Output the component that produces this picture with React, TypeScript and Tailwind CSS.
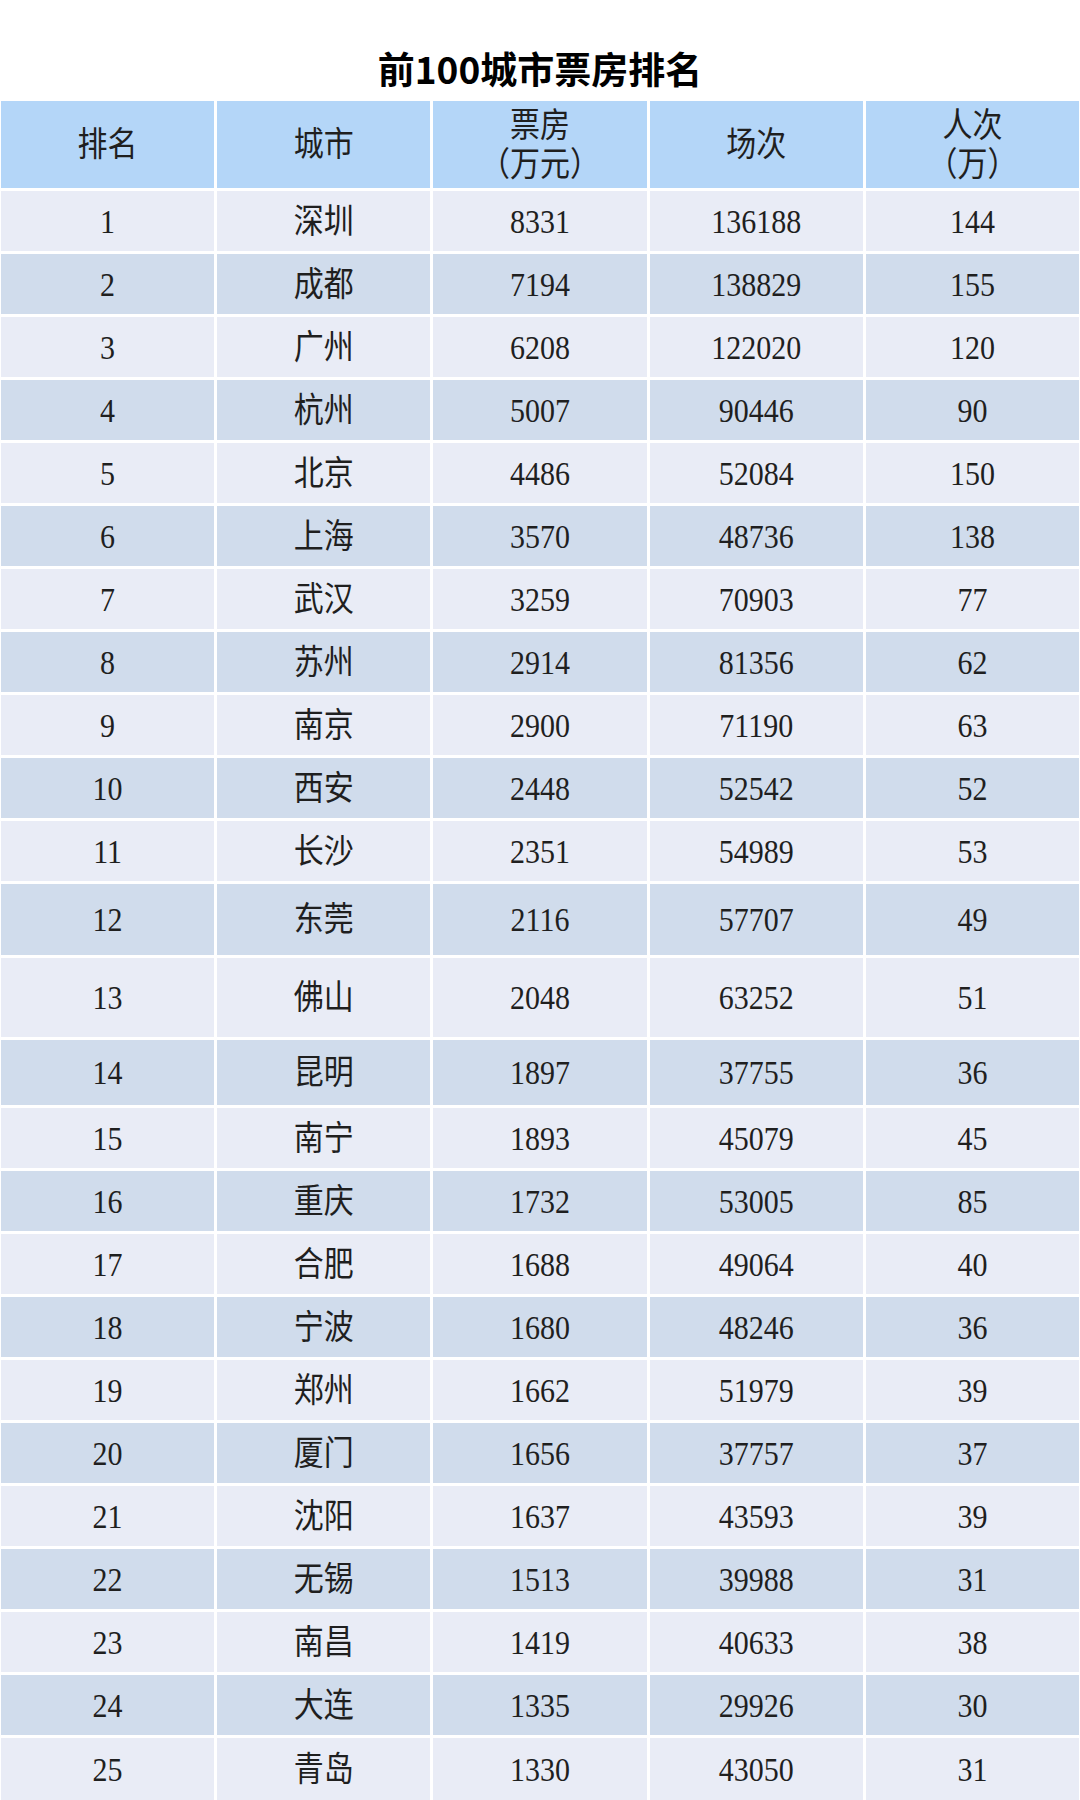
import React from "react";

type Row = { r: string; c: string; b: string; s: string; p: string; h: string };

const rows: Row[] = [
  { r: "1", c: "深圳", b: "8331", s: "136188", p: "144", h: "h-[60px]" },
  { r: "2", c: "成都", b: "7194", s: "138829", p: "155", h: "h-[60px]" },
  { r: "3", c: "广州", b: "6208", s: "122020", p: "120", h: "h-[60px]" },
  { r: "4", c: "杭州", b: "5007", s: "90446", p: "90", h: "h-[60px]" },
  { r: "5", c: "北京", b: "4486", s: "52084", p: "150", h: "h-[60px]" },
  { r: "6", c: "上海", b: "3570", s: "48736", p: "138", h: "h-[60px]" },
  { r: "7", c: "武汉", b: "3259", s: "70903", p: "77", h: "h-[60px]" },
  { r: "8", c: "苏州", b: "2914", s: "81356", p: "62", h: "h-[60px]" },
  { r: "9", c: "南京", b: "2900", s: "71190", p: "63", h: "h-[60px]" },
  { r: "10", c: "西安", b: "2448", s: "52542", p: "52", h: "h-[60px]" },
  { r: "11", c: "长沙", b: "2351", s: "54989", p: "53", h: "h-[60px]" },
  { r: "12", c: "东莞", b: "2116", s: "57707", p: "49", h: "h-[71px]" },
  { r: "13", c: "佛山", b: "2048", s: "63252", p: "51", h: "h-[79px]" },
  { r: "14", c: "昆明", b: "1897", s: "37755", p: "36", h: "h-[65px]" },
  { r: "15", c: "南宁", b: "1893", s: "45079", p: "45", h: "h-[60px]" },
  { r: "16", c: "重庆", b: "1732", s: "53005", p: "85", h: "h-[60px]" },
  { r: "17", c: "合肥", b: "1688", s: "49064", p: "40", h: "h-[60px]" },
  { r: "18", c: "宁波", b: "1680", s: "48246", p: "36", h: "h-[60px]" },
  { r: "19", c: "郑州", b: "1662", s: "51979", p: "39", h: "h-[60px]" },
  { r: "20", c: "厦门", b: "1656", s: "37757", p: "37", h: "h-[60px]" },
  { r: "21", c: "沈阳", b: "1637", s: "43593", p: "39", h: "h-[60px]" },
  { r: "22", c: "无锡", b: "1513", s: "39988", p: "31", h: "h-[60px]" },
  { r: "23", c: "南昌", b: "1419", s: "40633", p: "38", h: "h-[60px]" },
  { r: "24", c: "大连", b: "1335", s: "29926", p: "30", h: "h-[60px]" },
  { r: "25", c: "青岛", b: "1330", s: "43050", p: "31", h: "h-[62px]" },
];

const cellBase =
  "flex flex-col items-center justify-center text-center text-[30px] text-[#1f1f1f] font-['Liberation_Serif','Noto_Sans_CJK_SC',serif]";

function HeadCell({ lines }: { lines: string[] }) {
  return (
    <div className={`${cellBase} h-[87px] bg-[#b4d6f8] leading-[39px]`}>
      {lines.map((l, i) => (
        <span key={i} className="inline-block scale-y-[1.12]">
          {l}
        </span>
      ))}
    </div>
  );
}

export default function App() {
  return (
    <div className="w-[1080px] bg-white">
      <div className="h-[101px] pt-[50px] text-center text-[37px] leading-[37px] font-bold text-black font-['Noto_Sans_CJK_SC','Noto_Sans',sans-serif]">
        前100城市票房排名
      </div>
      <div className="grid grid-cols-5 gap-[3px] px-[1px]">
        <HeadCell lines={["排名"]} />
        <HeadCell lines={["城市"]} />
        <HeadCell lines={["票房", "（万元）"]} />
        <HeadCell lines={["场次"]} />
        <HeadCell lines={["人次", "（万）"]} />
        {rows.map((row, i) => {
          const bg = i % 2 === 0 ? "bg-[#e9ecf6]" : "bg-[#d0dcec]";
          return (
            <React.Fragment key={row.r}>
              {[row.r, row.c, row.b, row.s, row.p].map((v, j) => (
                <div key={j} className={`${cellBase} ${row.h} ${bg}`}>
                  <span className="inline-block scale-y-[1.12]">{v}</span>
                </div>
              ))}
            </React.Fragment>
          );
        })}
      </div>
    </div>
  );
}
